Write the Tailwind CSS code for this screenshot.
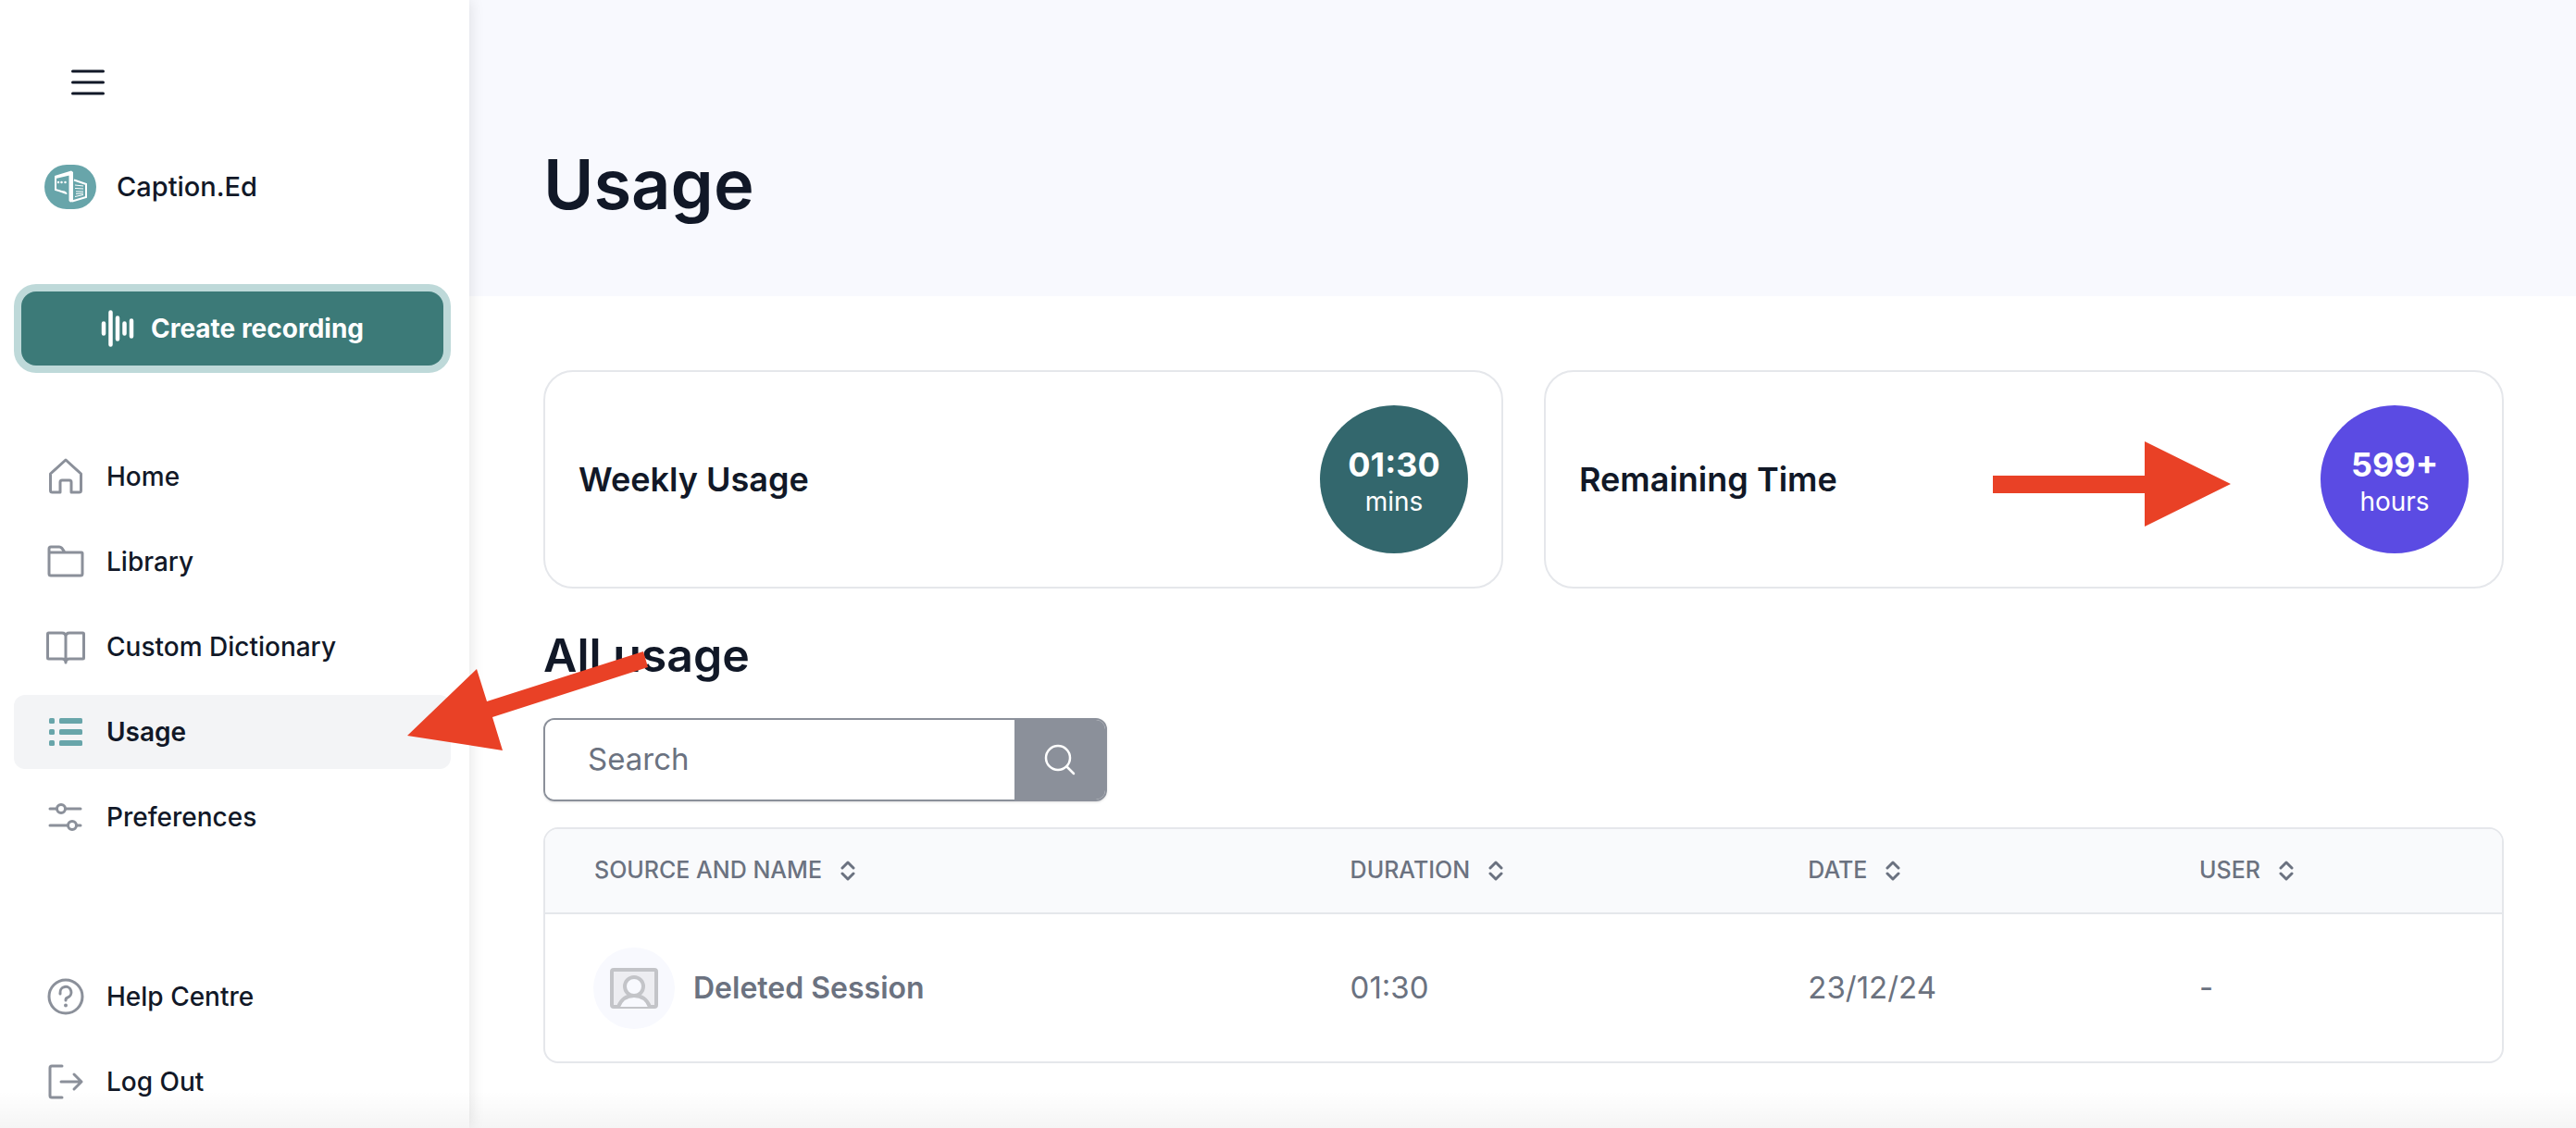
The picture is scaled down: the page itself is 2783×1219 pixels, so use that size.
<!DOCTYPE html>
<html lang="en">
<head>
    <meta charset="UTF-8">
    <meta name="viewport" content="width=device-width, initial-scale=1.0">
    <title>Caption.Ed - Usage</title>
    <script src="https://cdn.jsdelivr.net/npm/@tailwindcss/browser@4"></script>
    <style>
        body {
            font-family: 'Inter', 'Liberation Sans', sans-serif;
        }
    </style>
</head>
<body class="relative flex min-h-screen overflow-x-hidden bg-white text-[#111827]">

    <!-- Sidebar -->
    <aside class="relative z-10 flex w-[507px] shrink-0 flex-col bg-white pt-[60px] pr-5 pl-[15px] shadow-[0_0_16px_rgba(0,0,0,0.12)]">
        <button type="button" aria-label="Toggle menu" class="ml-[62px] w-9">
            <svg class="h-[58px] w-9" viewBox="0 0 36 58" fill="none" stroke="#111827" stroke-width="3" stroke-linecap="round">
                <path d="M1.500 17h33M1.500 29h33M1.500 41h33" />
            </svg>
        </button>

        <a href="#" class="mt-[60px] ml-[33px] flex h-12 items-center gap-[22px] text-[29px] font-medium">
            <svg class="h-12 w-14" viewBox="0 0 56 48" fill="none" stroke="#fff">
                <rect width="56" height="48" rx="24" fill="#68a5aa" stroke="none" />
                <path d="M27 10.500 12 14v13l5 1.500 7 2.500" stroke-width="2" />
                <path d="M17 28.500h5l3 3.500Z" fill="#fff" stroke="none" />
                <path d="M11 12 29 6.500l2 1.500v32l-3 .500-1.500-1.500V10L11 14.500Z" fill="#fff" stroke="none" />
                <path d="M32 16.500 45 21v14l-15 4.500" stroke-width="2" />
                <path d="M33 22l9 1M33 25.500l9 .500M34 29h8M34 31.500l8-.500M33 34.500l9-2" stroke-width="1" />
                <path d="M15 19h.010M18.500 19h.010M22.500 19h.010" stroke-width="2.500" stroke-linecap="round" />
            </svg>
            Caption.Ed
        </a>

        <button type="button" class="m-2 mt-[89px] flex h-20 items-center justify-center gap-[18px] rounded-2xl bg-[#3c7a78] text-[28px] font-bold text-white ring-8 ring-[#bed9d9]">
            <svg class="h-10 w-9" viewBox="0 0 36 40" stroke="#fff" stroke-width="4.500" stroke-linecap="round">
                <path d="M3 14.500v11M10.500 2.500v35M18 8.500v23M25.500 14.500v11M33 11.500v17" />
            </svg>
            Create recording
        </button>

        <nav class="mt-[72px] flex flex-col gap-3 text-[28px] font-medium">
            <a href="#" class="flex h-20 items-center gap-[22px] rounded-xl pl-[34px]">
                <svg class="h-11 w-11" viewBox="0 0 44 44" fill="none" stroke="#8b909a" stroke-width="3" stroke-linejoin="round">
                    <path d="M5.500 19 22 4l16.500 15v18a2 2 0 0 1-2 2H28V28a2 2 0 0 0-2-2h-8a2 2 0 0 0-2 2v11H7.500a2 2 0 0 1-2-2Z" />
                </svg>
                Home
            </a>
            <a href="#" class="flex h-20 items-center gap-[22px] rounded-xl pl-[34px]">
                <svg class="h-11 w-11" viewBox="0 0 44 44" fill="none" stroke="#8b909a" stroke-width="3" stroke-linejoin="round">
                    <path d="M4 13V8a2 2 0 0 1 2-2h9c2 0 3 1 6 6M4 12h35a1 1 0 0 1 1 1v22a2 2 0 0 1-2 2H6a2 2 0 0 1-2-2Z" />
                </svg>
                Library
            </a>
            <a href="#" class="flex h-20 items-center gap-[22px] rounded-xl pl-[34px]">
                <svg class="h-11 w-11" viewBox="0 0 44 44" fill="none" stroke="#8b909a" stroke-width="3" stroke-linejoin="round">
                    <path d="M22 39V11c0-3-2-4-4-4H3.500a1 1 0 0 0-1 1v26a1 1 0 0 0 1 1H18c2 0 4 1 4 4 0-3 2-4 4-4h14.500a1 1 0 0 0 1-1V8a1 1 0 0 0-1-1H26c-2 0-4 1-4 4" />
                </svg>
                Custom Dictionary
            </a>
            <a href="#" aria-current="page" class="flex h-20 items-center gap-[22px] rounded-xl bg-[#f3f4f6] pl-[34px] font-semibold">
                <svg class="h-11 w-11" viewBox="0 0 44 44" fill="#68a5aa">
                    <rect x="4" y="7" width="6" height="6" rx="1.500" /><rect x="15" y="7" width="25" height="6" rx="1.500" />
                    <rect x="4" y="19" width="6" height="6" rx="1.500" /><rect x="15" y="19" width="25" height="6" rx="1.500" />
                    <rect x="4" y="31" width="6" height="6" rx="1.500" /><rect x="15" y="31" width="25" height="6" rx="1.500" />
                </svg>
                Usage
            </a>
            <a href="#" class="flex h-20 items-center gap-[22px] rounded-xl pl-[34px]">
                <svg class="h-11 w-11" viewBox="0 0 44 44" fill="none" stroke="#8b909a" stroke-width="3" stroke-linecap="round">
                    <path d="M5 13h7M22 13h16M5 31h19M34 31h4" />
                    <circle cx="17" cy="13" r="4.500" /><circle cx="29" cy="31" r="4.500" />
                </svg>
                Preferences
            </a>
        </nav>

        <nav class="mt-[114px] flex flex-col gap-3 text-[28px] font-medium">
            <a href="#" class="flex h-20 items-center gap-[22px] rounded-xl pl-[34px]">
                <svg class="h-11 w-11" viewBox="0 0 44 44" fill="none" stroke="#8b909a" stroke-width="3" stroke-linecap="round">
                    <circle cx="22" cy="22" r="18" />
                    <path d="M16 19v-1a6 6 0 1 1 8 5c-1.500.500-2 1.500-2 3" />
                    <circle cx="22" cy="31.500" r="2" fill="#8b909a" stroke="none" />
                </svg>
                Help Centre
            </a>
            <a href="#" class="flex h-20 items-center gap-[22px] rounded-xl pl-[34px]">
                <svg class="h-11 w-11" viewBox="0 0 44 44" fill="none" stroke="#8b909a" stroke-width="3" stroke-linecap="round" stroke-linejoin="round">
                    <path d="M18 5H7a2 2 0 0 0-2 2v30a2 2 0 0 0 2 2h11M17 22h22M31 14l8 8-8 8" />
                </svg>
                Log Out
            </a>
        </nav>
    </aside>

    <!-- Page content -->
    <main class="min-w-0 grow">
        <header class="flex h-80 items-center bg-[#f8f9fe] px-20 pt-[78px]">
            <h1 class="text-[74px] leading-[80px] font-semibold">Usage</h1>
        </header>

        <div class="pt-20 pr-[78px] pl-20">
            <div class="grid grid-cols-2 gap-11">
                <section class="flex items-center justify-between rounded-[32px] border-2 border-[#e5e7eb] p-9">
                    <h2 class="text-[36px] font-semibold">Weekly Usage</h2>
                    <div class="flex size-40 flex-col items-center justify-center rounded-full bg-[#33676d] pt-2 text-white">
                        <span class="text-[36px] leading-10 font-bold">01:30</span>
                        <span class="text-[28px] leading-10">mins</span>
                    </div>
                </section>
                <section class="flex items-center justify-between rounded-[32px] border-2 border-[#e5e7eb] p-9">
                    <h2 class="text-[36px] font-semibold">Remaining Time</h2>
                    <div class="flex size-40 flex-col items-center justify-center rounded-full bg-[#5b4be3] pt-2 text-white">
                        <span class="text-[36px] leading-10 font-bold">599+</span>
                        <span class="text-[28px] leading-10">hours</span>
                    </div>
                </section>
            </div>

            <h2 class="mt-10 text-[50px] leading-[64px] font-semibold">All usage</h2>

            <form class="mt-9 flex h-[90px] w-[609px] overflow-hidden rounded-xl border-2 border-[#8b909a] shadow-sm">
                <input type="search" aria-label="Search" placeholder="Search" class="min-w-0 grow bg-white pl-[46px] text-[33px] outline-none placeholder:text-[#6b7280]">
                <button type="submit" aria-label="Search" class="flex w-[98px] shrink-0 items-center justify-center bg-[#8b909a]">
                    <svg class="size-10" viewBox="0 0 40 40" fill="none" stroke="#fff" stroke-width="2.500" stroke-linecap="round">
                        <circle cx="18" cy="18" r="13" /><path d="m27.500 27.500 7.500 7.500" />
                    </svg>
                </button>
            </form>

            <div class="mt-7 overflow-hidden rounded-2xl border-2 border-[#e5e7eb]">
                <table class="w-full table-fixed text-left text-[#6b7280]">
                    <colgroup><col class="w-[40%]"><col class="w-[23.400%]"><col class="w-[20%]"><col></colgroup>
                    <thead class="border-b-2 border-[#e5e7eb] bg-[#f9fafc] text-[25px]">
                        <tr class="h-[91px]">
                            <th scope="col" class="pl-[53px] font-medium"><button type="button" class="flex items-center gap-5">SOURCE AND NAME
                                <svg class="h-6 w-4" viewBox="0 0 16 24" fill="none" stroke="#6b7280" stroke-width="3" stroke-linecap="round" stroke-linejoin="round"><path d="m2 9 6-6 6 6M2 15l6 6 6-6" /></svg></button></th>
                            <th scope="col" class="pl-6 font-medium"><button type="button" class="flex items-center gap-5">DURATION
                                <svg class="h-6 w-4" viewBox="0 0 16 24" fill="none" stroke="#6b7280" stroke-width="3" stroke-linecap="round" stroke-linejoin="round"><path d="m2 9 6-6 6 6M2 15l6 6 6-6" /></svg></button></th>
                            <th scope="col" class="pl-6 font-medium"><button type="button" class="flex items-center gap-5">DATE
                                <svg class="h-6 w-4" viewBox="0 0 16 24" fill="none" stroke="#6b7280" stroke-width="3" stroke-linecap="round" stroke-linejoin="round"><path d="m2 9 6-6 6 6M2 15l6 6 6-6" /></svg></button></th>
                            <th scope="col" class="pl-6 font-medium"><button type="button" class="flex items-center gap-5">USER
                                <svg class="h-6 w-4" viewBox="0 0 16 24" fill="none" stroke="#6b7280" stroke-width="3" stroke-linecap="round" stroke-linejoin="round"><path d="m2 9 6-6 6 6M2 15l6 6 6-6" /></svg></button></th>
                        </tr>
                    </thead>
                    <tbody class="text-[33px]">
                        <tr class="h-40">
                            <td class="pl-[52px]">
                                <div class="flex items-center gap-5 font-semibold">
                                    <span class="flex size-[88px] items-center justify-center rounded-full bg-[#f8f9fe]">
                                        <svg class="h-11 w-[52px]" viewBox="0 0 52 44" stroke="#c3c4c8" stroke-width="4">
                                            <rect x="2" y="2" width="48" height="40" rx="2" fill="#ededf1" />
                                            <path d="M9 42c3-8 9-12 17-12s14 4 17 12" fill="#f8f9fe" />
                                            <circle cx="26" cy="20" r="10" fill="#f8f9fe" />
                                        </svg>
                                    </span>
                                    <span class="text-[32px]">Deleted Session</span>
                                </div>
                            </td>
                            <td class="pl-6">01:30</td>
                            <td class="pl-6">23/12/24</td>
                            <td class="pl-6">-</td>
                        </tr>
                    </tbody>
                </table>
            </div>
        </div>
    </main>

    <!-- Annotation arrows and the fade at the bottom edge -->
    <svg class="pointer-events-none absolute top-[703px] left-[440px] z-20 h-[108px] w-[260px]" viewBox="0 0 260 108" fill="#e94126">
        <path d="M0 92 75 20 86 55 255 1 260 18 92 72 103 108Z" />
    </svg>
    <svg class="pointer-events-none absolute top-[477px] right-[373px] z-20 h-[92px] w-[257px]" viewBox="0 0 257 92" fill="#e94126">
        <path d="M0 37H164V0L257 46 164 92V56H0Z" />
    </svg>
    <div class="pointer-events-none absolute inset-x-0 bottom-0 z-20 h-10 bg-linear-to-t from-black/4 to-transparent"></div>
</body>
</html>
